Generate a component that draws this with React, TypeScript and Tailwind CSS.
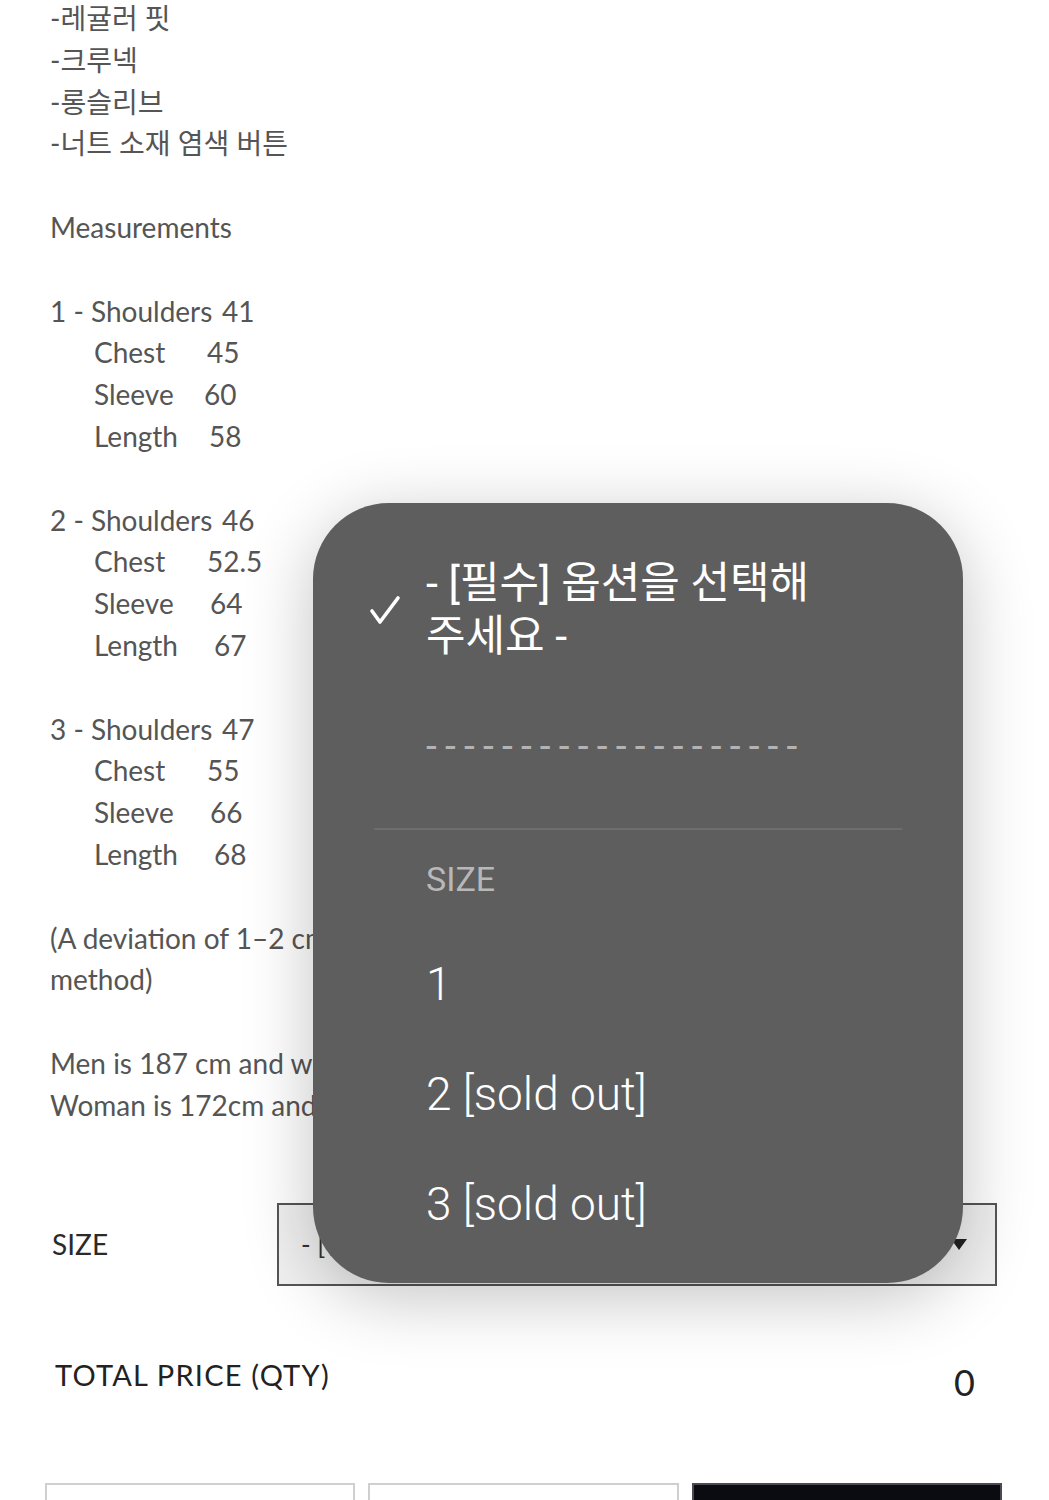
import React from 'react';

const features = ['-레귤러 핏', '-크루넥', '-롱슬리브', '-너트 소재 염색 버튼'];

const sizes = [
  {
    n: '1',
    shoulders: '41',
    rows: [
      { label: 'Chest', value: '45', w: 'w-[113px]' },
      { label: 'Sleeve', value: '60', w: 'w-[110px]' },
      { label: 'Length', value: '58', w: 'w-[115px]' },
    ],
  },
  {
    n: '2',
    shoulders: '46',
    rows: [
      { label: 'Chest', value: '52.5', w: 'w-[113px]' },
      { label: 'Sleeve', value: '64', w: 'w-[116px]' },
      { label: 'Length', value: '67', w: 'w-[120px]' },
    ],
  },
  {
    n: '3',
    shoulders: '47',
    rows: [
      { label: 'Chest', value: '55', w: 'w-[113px]' },
      { label: 'Sleeve', value: '66', w: 'w-[116px]' },
      { label: 'Length', value: '68', w: 'w-[120px]' },
    ],
  },
];

const options = ['1', '2 [sold out]', '3 [sold out]'];

const App: React.FC = () => {
  return (
    <div className="relative w-[1049px] h-[1500px] overflow-hidden bg-white">
      {/* product description */}
      <div className="pl-[50px] pr-[40px] -mt-[2px] text-[28px] leading-[41.8px] text-[#555] font-['Lato','Noto_Sans_CJK_KR',sans-serif]">
        <div className="mb-[41.8px]">
          {features.map((f, i) => (
            <p key={i}>{f}</p>
          ))}
        </div>
        <p className="mb-[41.8px]">Measurements</p>

        {sizes.map((s) => (
          <div key={s.n} className="mb-[41.8px]">
            <p>
              <span className="inline-block w-[172px]">{s.n} - Shoulders</span>
              {s.shoulders}
            </p>
            {s.rows.map((r) => (
              <p key={r.label} className="pl-[44px]">
                <span className={`inline-block ${r.w}`}>{r.label}</span>
                {r.value}
              </p>
            ))}
          </div>
        ))}

        <p className="mb-[41.8px]">
          (A deviation of 1–2 cm may occur depending on the measuring
          <br />
          method)
        </p>
        <p>
          Men is 187 cm and wears size 3.
          <br />
          Woman is 172cm and wears size 1.
        </p>
      </div>

      {/* size select */}
      <div className="flex items-center mt-[76px] pl-[52px] pr-[52px] font-['Lato',sans-serif]">
        <span className="w-[225px] text-[28px] text-[#2a2a2a]">SIZE</span>
        <div className="flex-1 h-[83px] border-2 border-[#555] bg-[#f0f0f0] flex items-center justify-between pl-[22px] pr-[28px]">
          <span className="text-[26px] text-[#333] font-['Lato','Noto_Sans_CJK_KR',sans-serif]">- [필수] 옵션을 선택해 주세요 -</span>
          <svg width="16" height="11" viewBox="0 0 16 11">
            <path d="M0 0 H16 L8 11 Z" fill="#222" />
          </svg>
        </div>
      </div>

      {/* total */}
      <div className="flex items-center justify-between mt-[55px] pl-[55px] pr-[74px] font-['Lato',sans-serif] text-[#222]">
        <span className="text-[29px] tracking-[1.2px]">TOTAL PRICE (QTY)</span>
        <span className="text-[36px] mt-[14px]">0</span>
      </div>

      {/* buttons */}
      <div className="flex gap-[13px] mt-[74px] pl-[45px] pr-[47px]">
        <div className="flex-1 h-[70px] border-2 border-[#cfcfcf] bg-white" />
        <div className="flex-1 h-[70px] border-2 border-[#cfcfcf] bg-white" />
        <div className="flex-1 h-[70px] border-2 border-[#4a4a52] bg-[#0b0b12]" />
      </div>

      {/* native select popup */}
      <div className="absolute left-[313px] top-[503px] w-[650px] h-[780px] rounded-[76px] bg-[#5e5e5e] shadow-[0_14px_70px_rgba(0,0,0,0.24)] font-['Roboto','Noto_Sans_CJK_KR',sans-serif] text-white">
        <div className="pt-[54px] flex items-center">
          <div className="w-[113px] flex justify-end pr-[25px]">
            <svg width="32" height="30" viewBox="0 0 32 30">
              <polyline points="3,16 11,27 29,3" fill="none" stroke="#fff" strokeWidth="3.6" strokeLinecap="round" strokeLinejoin="round" />
            </svg>
          </div>
          <p className="text-[43px] leading-[53px]">
            - [필수] 옵션을 선택해
            <br />
            주세요 -
          </p>
        </div>
        <p className="mt-[57px] h-[53px] pl-[113px] text-[39px] leading-[53px] text-[#b3b3b3] tracking-[8.2px]">
          --------------------
        </p>
        <div className="mt-[55px] mx-[61px] h-[2px] bg-[#6e6e6e]" />
        <div className="h-[99px] flex items-center pl-[113px] text-[34px] text-[#b8b8b8]">SIZE</div>
        {options.map((o) => (
          <div key={o} className="h-[110px] flex items-center pl-[113px] text-[46px] font-light">
            {o}
          </div>
        ))}
      </div>
    </div>
  );
};

export default App;
